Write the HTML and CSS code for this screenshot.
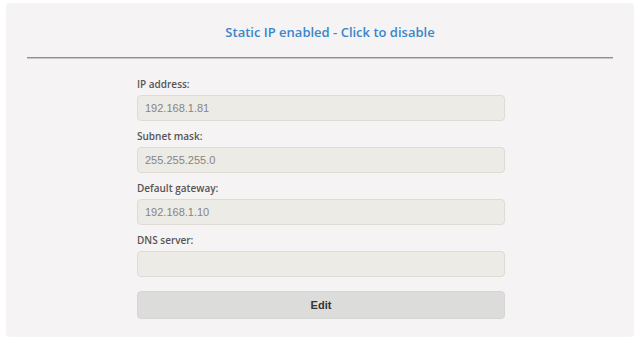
FILE: index.html
```html
<!DOCTYPE html>
<html lang="en">
<head>
    <meta charset="UTF-8">
    <title>Network settings</title>
    <link rel="stylesheet" href="styles.css">
</head>
<body>
    <div class="panel">
        <div class="panel-title">
            <a href="javascript:void(0);" id="toggle">Static IP enabled - Click to disable</a>
        </div>
        <hr class="divider">
        <form class="net-form">
            <div class="field">
                <label for="ip">IP address:</label>
                <input type="text" id="ip" class="field-input" value="192.168.1.81" readonly>
            </div>
            <div class="field">
                <label for="mask">Subnet mask:</label>
                <input type="text" id="mask" class="field-input" value="255.255.255.0" readonly>
            </div>
            <div class="field">
                <label for="gw">Default gateway:</label>
                <input type="text" id="gw" class="field-input" value="192.168.1.10" readonly>
            </div>
            <div class="field">
                <label for="dns">DNS server:</label>
                <input type="text" id="dns" class="field-input" value="" readonly>
            </div>
            <button type="button" class="edit-btn">Edit</button>
        </form>
    </div>
</body>
</html>
```

FILE: styles.css
```css
*{
    margin: 0;
    padding: 0;
    box-sizing: border-box;
}
body{
    background-color: #fff;
    padding: 3px 7px 4px 6px;
    font-family: "Liberation Sans", Arial, sans-serif;
}
a{
    text-decoration: none;
}

/* 面板 */
.panel{
    height: 334px;
    background-color: #f5f3f3;
    border-radius: 4px;
    padding-top: 17px;
}
.panel-title{
    height: 24px;
    line-height: 24px;
    padding-left: 20px;
    text-align: center;
}
.panel-title a{
    font-family: "Open Sans", sans-serif;
    font-weight: 600;
    font-size: 13px;
    color: #3a86cc;
}
.divider{
    margin: 13px 21px 0 21px;
    border: none;
    border-top: 1px solid #8e8e8e;
    border-bottom: 1px solid #c9c9c9;
}

/* 表单 */
.net-form{
    width: 368px;
    margin: 17px 0 0 131px;
}
.field{
    margin-bottom: 7px;
}
.field label{
    display: block;
    height: 16px;
    line-height: 16px;
    margin-bottom: 3px;
    font-family: "Open Sans", sans-serif;
    font-weight: 600;
    font-size: 10px;
    color: #555;
}
.field-input{
    display: block;
    width: 100%;
    height: 26px;
    padding: 0 7px;
    background-color: #edebe6;
    border: 1px solid #dedbd5;
    border-radius: 4px;
    font-family: "Liberation Sans", Arial, sans-serif;
    font-size: 11px;
    color: #858585;
    outline: none;
}
.edit-btn{
    display: block;
    width: 100%;
    height: 28px;
    margin-top: 14px;
    background-color: #dcdcdb;
    border: 1px solid #d6d6d5;
    border-radius: 4px;
    font-family: "Liberation Sans", Arial, sans-serif;
    font-weight: bold;
    font-size: 11px;
    color: #333;
}
```
